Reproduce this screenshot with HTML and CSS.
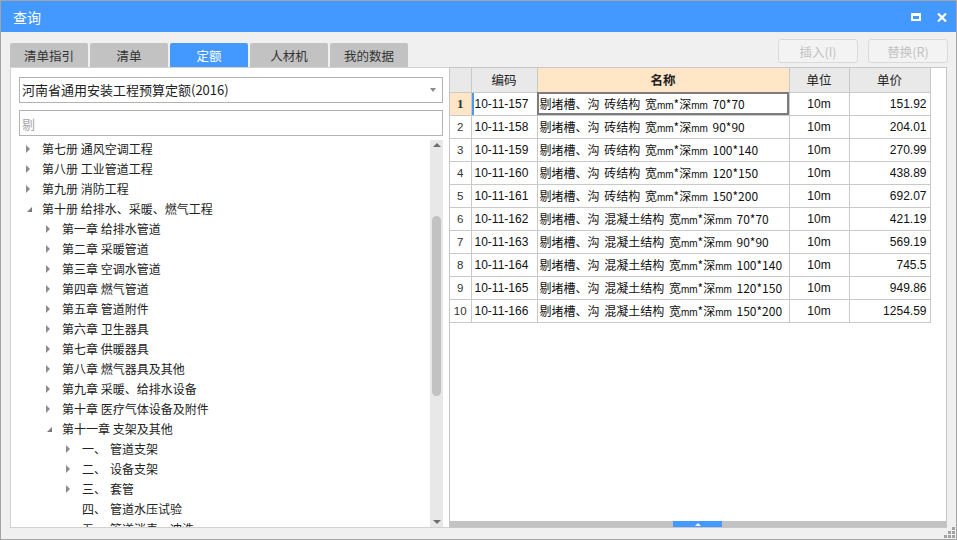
FILE: index.html
```html
<!DOCTYPE html>
<html lang="zh">
<head>
<meta charset="utf-8">
<title>查询</title>
<link rel="stylesheet" href="styles.css">
</head>
<body>
<div class="window">
  <div class="titlebar">
    <span class="title">查询</span>
    <div class="win-btns">
      <svg class="ico-max" width="10" height="8" viewBox="0 0 10 8"><rect x="1" y="1.5" width="8" height="5.5" fill="none" stroke="#fff" stroke-width="2"/><rect x="0" y="0" width="10" height="3" fill="#fff"/></svg>
      <svg class="ico-close" width="10" height="9" viewBox="0 0 10 9"><path d="M1 0.5 L9 8.5 M9 0.5 L1 8.5" stroke="#fff" stroke-width="2.2"/></svg>
    </div>
  </div>
  <div class="main">
    <div class="toprow">
      <div class="tabs">
        <div class="tab">清单指引</div>
        <div class="tab">清单</div>
        <div class="tab active">定额</div>
        <div class="tab">人材机</div>
        <div class="tab">我的数据</div>
      </div>
      <div class="actions">
        <button class="btn" disabled>插入(I)</button>
        <button class="btn" disabled>替换(R)</button>
      </div>
    </div>
    <div class="panels">
      <div class="left">
        <div class="select"><span>河南省通用安装工程预算定额(2016)</span><span class="caret"></span></div>
        <div class="search">剔</div>
        <div class="treewrap">
          <div class="tree">
            <div class="row l1"><span class="tg closed"></span>第七册 通风空调工程</div>
            <div class="row l1"><span class="tg closed"></span>第八册 工业管道工程</div>
            <div class="row l1"><span class="tg closed"></span>第九册 消防工程</div>
            <div class="row l1"><span class="tg open"></span>第十册 给排水、采暖、燃气工程</div>
            <div class="row l2"><span class="tg closed"></span>第一章 给排水管道</div>
            <div class="row l2"><span class="tg closed"></span>第二章 采暖管道</div>
            <div class="row l2"><span class="tg closed"></span>第三章 空调水管道</div>
            <div class="row l2"><span class="tg closed"></span>第四章 燃气管道</div>
            <div class="row l2"><span class="tg closed"></span>第五章 管道附件</div>
            <div class="row l2"><span class="tg closed"></span>第六章 卫生器具</div>
            <div class="row l2"><span class="tg closed"></span>第七章 供暖器具</div>
            <div class="row l2"><span class="tg closed"></span>第八章 燃气器具及其他</div>
            <div class="row l2"><span class="tg closed"></span>第九章 采暖、给排水设备</div>
            <div class="row l2"><span class="tg closed"></span>第十章 医疗气体设备及附件</div>
            <div class="row l2"><span class="tg open"></span>第十一章 支架及其他</div>
            <div class="row l3"><span class="tg closed"></span><span class="num">一、</span>管道支架</div>
            <div class="row l3"><span class="tg closed"></span><span class="num">二、</span>设备支架</div>
            <div class="row l3"><span class="tg closed"></span><span class="num">三、</span>套管</div>
            <div class="row l3"><span class="tg"></span><span class="num">四、</span>管道水压试验</div>
            <div class="row l3"><span class="tg"></span><span class="num">五、</span>管道消毒、冲洗</div>
          </div>
          <div class="vscroll">
            <span class="arrow-up"></span>
            <div class="vthumb"></div>
            <span class="vspace"></span>
            <span class="arrow-down"></span>
          </div>
        </div>
      </div>
      <div class="right">
        <div class="gridwrap">
          <table class="grid">
            <colgroup><col class="c-no"><col class="c-code"><col class="c-name"><col class="c-unit"><col class="c-price"></colgroup>
            <thead>
              <tr><th></th><th>编码</th><th class="hl">名称</th><th>单位</th><th>单价</th></tr>
            </thead>
            <tbody>
              <tr class="cur"><td class="no">1</td><td class="code">10-11-157</td><td class="name">剔堵槽、沟 砖结构 宽<small>mm</small>*深<small>mm</small> 70*70</td><td class="unit">10m</td><td class="price">151.92</td></tr>
              <tr><td class="no">2</td><td class="code">10-11-158</td><td class="name">剔堵槽、沟 砖结构 宽<small>mm</small>*深<small>mm</small> 90*90</td><td class="unit">10m</td><td class="price">204.01</td></tr>
              <tr><td class="no">3</td><td class="code">10-11-159</td><td class="name">剔堵槽、沟 砖结构 宽<small>mm</small>*深<small>mm</small> 100*140</td><td class="unit">10m</td><td class="price">270.99</td></tr>
              <tr><td class="no">4</td><td class="code">10-11-160</td><td class="name">剔堵槽、沟 砖结构 宽<small>mm</small>*深<small>mm</small> 120*150</td><td class="unit">10m</td><td class="price">438.89</td></tr>
              <tr><td class="no">5</td><td class="code">10-11-161</td><td class="name">剔堵槽、沟 砖结构 宽<small>mm</small>*深<small>mm</small> 150*200</td><td class="unit">10m</td><td class="price">692.07</td></tr>
              <tr><td class="no">6</td><td class="code">10-11-162</td><td class="name">剔堵槽、沟 混凝土结构 宽<small>mm</small>*深<small>mm</small> 70*70</td><td class="unit">10m</td><td class="price">421.19</td></tr>
              <tr><td class="no">7</td><td class="code">10-11-163</td><td class="name">剔堵槽、沟 混凝土结构 宽<small>mm</small>*深<small>mm</small> 90*90</td><td class="unit">10m</td><td class="price">569.19</td></tr>
              <tr><td class="no">8</td><td class="code">10-11-164</td><td class="name">剔堵槽、沟 混凝土结构 宽<small>mm</small>*深<small>mm</small> 100*140</td><td class="unit">10m</td><td class="price">745.5</td></tr>
              <tr><td class="no">9</td><td class="code">10-11-165</td><td class="name">剔堵槽、沟 混凝土结构 宽<small>mm</small>*深<small>mm</small> 120*150</td><td class="unit">10m</td><td class="price">949.86</td></tr>
              <tr><td class="no">10</td><td class="code">10-11-166</td><td class="name">剔堵槽、沟 混凝土结构 宽<small>mm</small>*深<small>mm</small> 150*200</td><td class="unit">10m</td><td class="price">1254.59</td></tr>
            </tbody>
          </table>
        </div>
        <div class="hscroll"><div class="hthumb"><span class="hthumb-arrow"></span></div></div>
      </div>
    </div>
  </div>
  <div class="statusbar">
    <svg class="grip" width="11" height="11" viewBox="0 0 11 11">
      <rect x="8" y="0" width="3" height="3" fill="#a3a3a3"/>
      <rect x="4" y="4" width="3" height="3" fill="#a3a3a3"/>
      <rect x="8" y="4" width="3" height="3" fill="#a3a3a3"/>
      <rect x="0" y="8" width="3" height="3" fill="#a3a3a3"/>
      <rect x="4" y="8" width="3" height="3" fill="#a3a3a3"/>
      <rect x="8" y="8" width="3" height="3" fill="#a3a3a3"/>
    </svg>
  </div>
</div>
</body>
</html>
```

FILE: styles.css
```css
* { box-sizing: border-box; }
html, body { margin: 0; padding: 0; background: #f0f0f0; }
body {
  font-family: "Noto Sans CJK SC", "Noto Sans", sans-serif;
  font-size: 12px;
  color: #222;
}
.window {
  width: 957px;
  height: 540px;
  border: 1px solid #a4a4a4;
  background: #f0f0f0;
  display: flex;
  flex-direction: column;
  overflow: hidden;
}
.titlebar {
  height: 31px;
  flex: none;
  background: #4399ff;
  display: flex;
  align-items: center;
  justify-content: space-between;
  padding: 0 9px 0 12px;
}
.title { color: #fff; font-size: 14px; line-height: 1; margin-top: 1px; }
.win-btns { display: flex; align-items: center; gap: 16px; margin-top: 1px; }
.win-btns svg { display: block; }

.main {
  flex: none;
  padding: 0 8px 0 9px;
  display: flex;
  flex-direction: column;
}
.toprow {
  height: 35px;
  display: flex;
  justify-content: space-between;
}
.tabs { display: flex; gap: 2px; align-self: flex-end; }
.tab {
  width: 78px;
  height: 24px;
  background: #c2c2c2;
  color: #333;
  border-radius: 2px 2px 0 0;
  display: flex;
  align-items: center;
  justify-content: center;
  font-size: 12.5px;
}
.tab.active { background: #4399ff; color: #fff; }
.actions { display: flex; gap: 10px; margin-top: 7px; }
.btn {
  width: 80px;
  height: 24px;
  border: 1px solid #dadada;
  border-radius: 3px;
  background: #f3f3f3;
  color: #c2c2c2;
  font-family: inherit;
  font-size: 12.5px;
  padding: 0;
}

.panels { height: 461px; display: flex; }
.left {
  width: 439px;
  background: #fff;
  border: 1px solid #d2d2d2;
  border-right: none;
  padding: 9px 6px 0 8px;
  display: flex;
  flex-direction: column;
}
.select {
  height: 26px;
  border: 1px solid #b3b3b3;
  display: flex;
  align-items: center;
  justify-content: space-between;
  padding: 0 6px 1px 2px;
  font-size: 13px;
  color: #222;
}
.caret {
  width: 0; height: 0;
  border-left: 3.5px solid transparent;
  border-right: 3.5px solid transparent;
  border-top: 4px solid #8a8a8a;
}
.search {
  margin-top: 7px;
  height: 26px;
  border: 1px solid #b3b3b3;
  display: flex;
  align-items: center;
  padding-left: 2px;
  font-size: 13px;
  color: #a6a6a6;
}
.treewrap {
  margin-top: 4px;
  flex: 1;
  min-height: 0;
  display: flex;
}
.tree { flex: 1; overflow: hidden; }
.tree-inner { margin-top: -2px; }
.row {
  height: 20px;
  display: flex;
  align-items: center;
  white-space: nowrap;
  color: #222;
}
.row:first-child { margin-top: -2px; }
.l1 { padding-left: 7px; }
.l2 { padding-left: 27px; }
.l3 { padding-left: 47px; }
.tg { width: 16px; height: 20px; flex: none; display: flex; align-items: center; padding-top: 1px; }
.tg.closed::before {
  content: "";
  width: 0; height: 0;
  border-left: 4px solid #8c8c8c;
  border-top: 4px solid transparent;
  border-bottom: 4px solid transparent;
}
.tg.open::before {
  content: "";
  width: 0; height: 0;
  margin-left: 1px;
  margin-top: 1px;
  border-left: 5px solid transparent;
  border-bottom: 5px solid #7a7a7a;
}
.num { display: inline-block; width: 28px; }

.vscroll {
  width: 13px;
  flex: none;
  background: #e8e8e8;
  display: flex;
  flex-direction: column;
  align-items: center;
  padding: 3px 0 3px;
}
.arrow-up {
  width: 0; height: 0;
  border-left: 4px solid transparent;
  border-right: 4px solid transparent;
  border-bottom: 4px solid #6e6e78;
}
.arrow-down {
  width: 0; height: 0;
  border-left: 4px solid transparent;
  border-right: 4px solid transparent;
  border-top: 4px solid #6e6e78;
}
.vthumb {
  margin-top: 69px;
  width: 9px;
  height: 180px;
  border-radius: 5px;
  background: #c2c2c2;
}
.vspace { flex: 1; }

.right {
  width: 498px;
  background: #fff;
  border: 1px solid #c6c6c6;
  display: flex;
  flex-direction: column;
}
.gridwrap { flex: 1; min-height: 0; overflow: hidden; }
.grid {
  border-collapse: collapse;
  table-layout: fixed;
  width: 480px;
  font-family: "Liberation Sans", "Noto Sans CJK SC", sans-serif;
  font-size: 12px;
}
.c-no { width: 21px; }
.c-code { width: 66px; }
.c-name { width: 252px; }
.c-unit { width: 60px; }
.c-price { width: 81px; }
.grid th, .grid td {
  border: 1px solid #c9c9c9;
  padding: 0;
  white-space: nowrap;
  overflow: hidden;
}
.grid th {
  height: 24px;
  background: #e9e9e9;
  font-weight: normal;
  font-family: "Noto Sans CJK SC", sans-serif;
  font-size: 12.5px;
  color: #222;
  border-top: none;
}
.grid th.hl { background: #fee6c6; font-weight: bold; }
.grid th:first-child, .grid td:first-child { border-left: none; }
.grid td { height: 23px; color: #111; }
.grid td.no { text-align: center; color: #333; font-size: 11.5px; }
.grid td.code { padding-left: 3px; }
.grid td.name { padding-left: 2px; font-family: "Noto Sans CJK SC", sans-serif; word-spacing: 2px; }
.grid td.name small { font-size: 10px; font-family: "Liberation Sans", sans-serif; }
.grid td.unit { text-align: center; }
.grid td.price { text-align: right; padding-right: 3px; }
.grid tr.cur td.no { background: #fee6c6; font-weight: bold; font-family: "Liberation Serif", serif; font-size: 13px; }
.grid tr.cur td.code { box-shadow: inset 2px 0 0 #4a9af5; }
.grid tr.cur td.name { outline: 2px solid #7c7c7c; outline-offset: -2px; }

.hscroll {
  height: 6px;
  flex: none;
  background: #c2c2c2;
  display: flex;
}
.hthumb {
  margin-left: 223px;
  width: 49px;
  background: #4399ff;
  display: flex;
  justify-content: center;
  align-items: center;
}
.hthumb-arrow {
  width: 0; height: 0;
  border-left: 3px solid transparent;
  border-right: 3px solid transparent;
  border-bottom: 3px solid #fff;
}

.statusbar {
  flex: 1;
  display: flex;
  justify-content: flex-end;
  align-items: flex-start;
  padding-right: 1px;
}
.grip { display: block; margin-top: -1px; }
```
